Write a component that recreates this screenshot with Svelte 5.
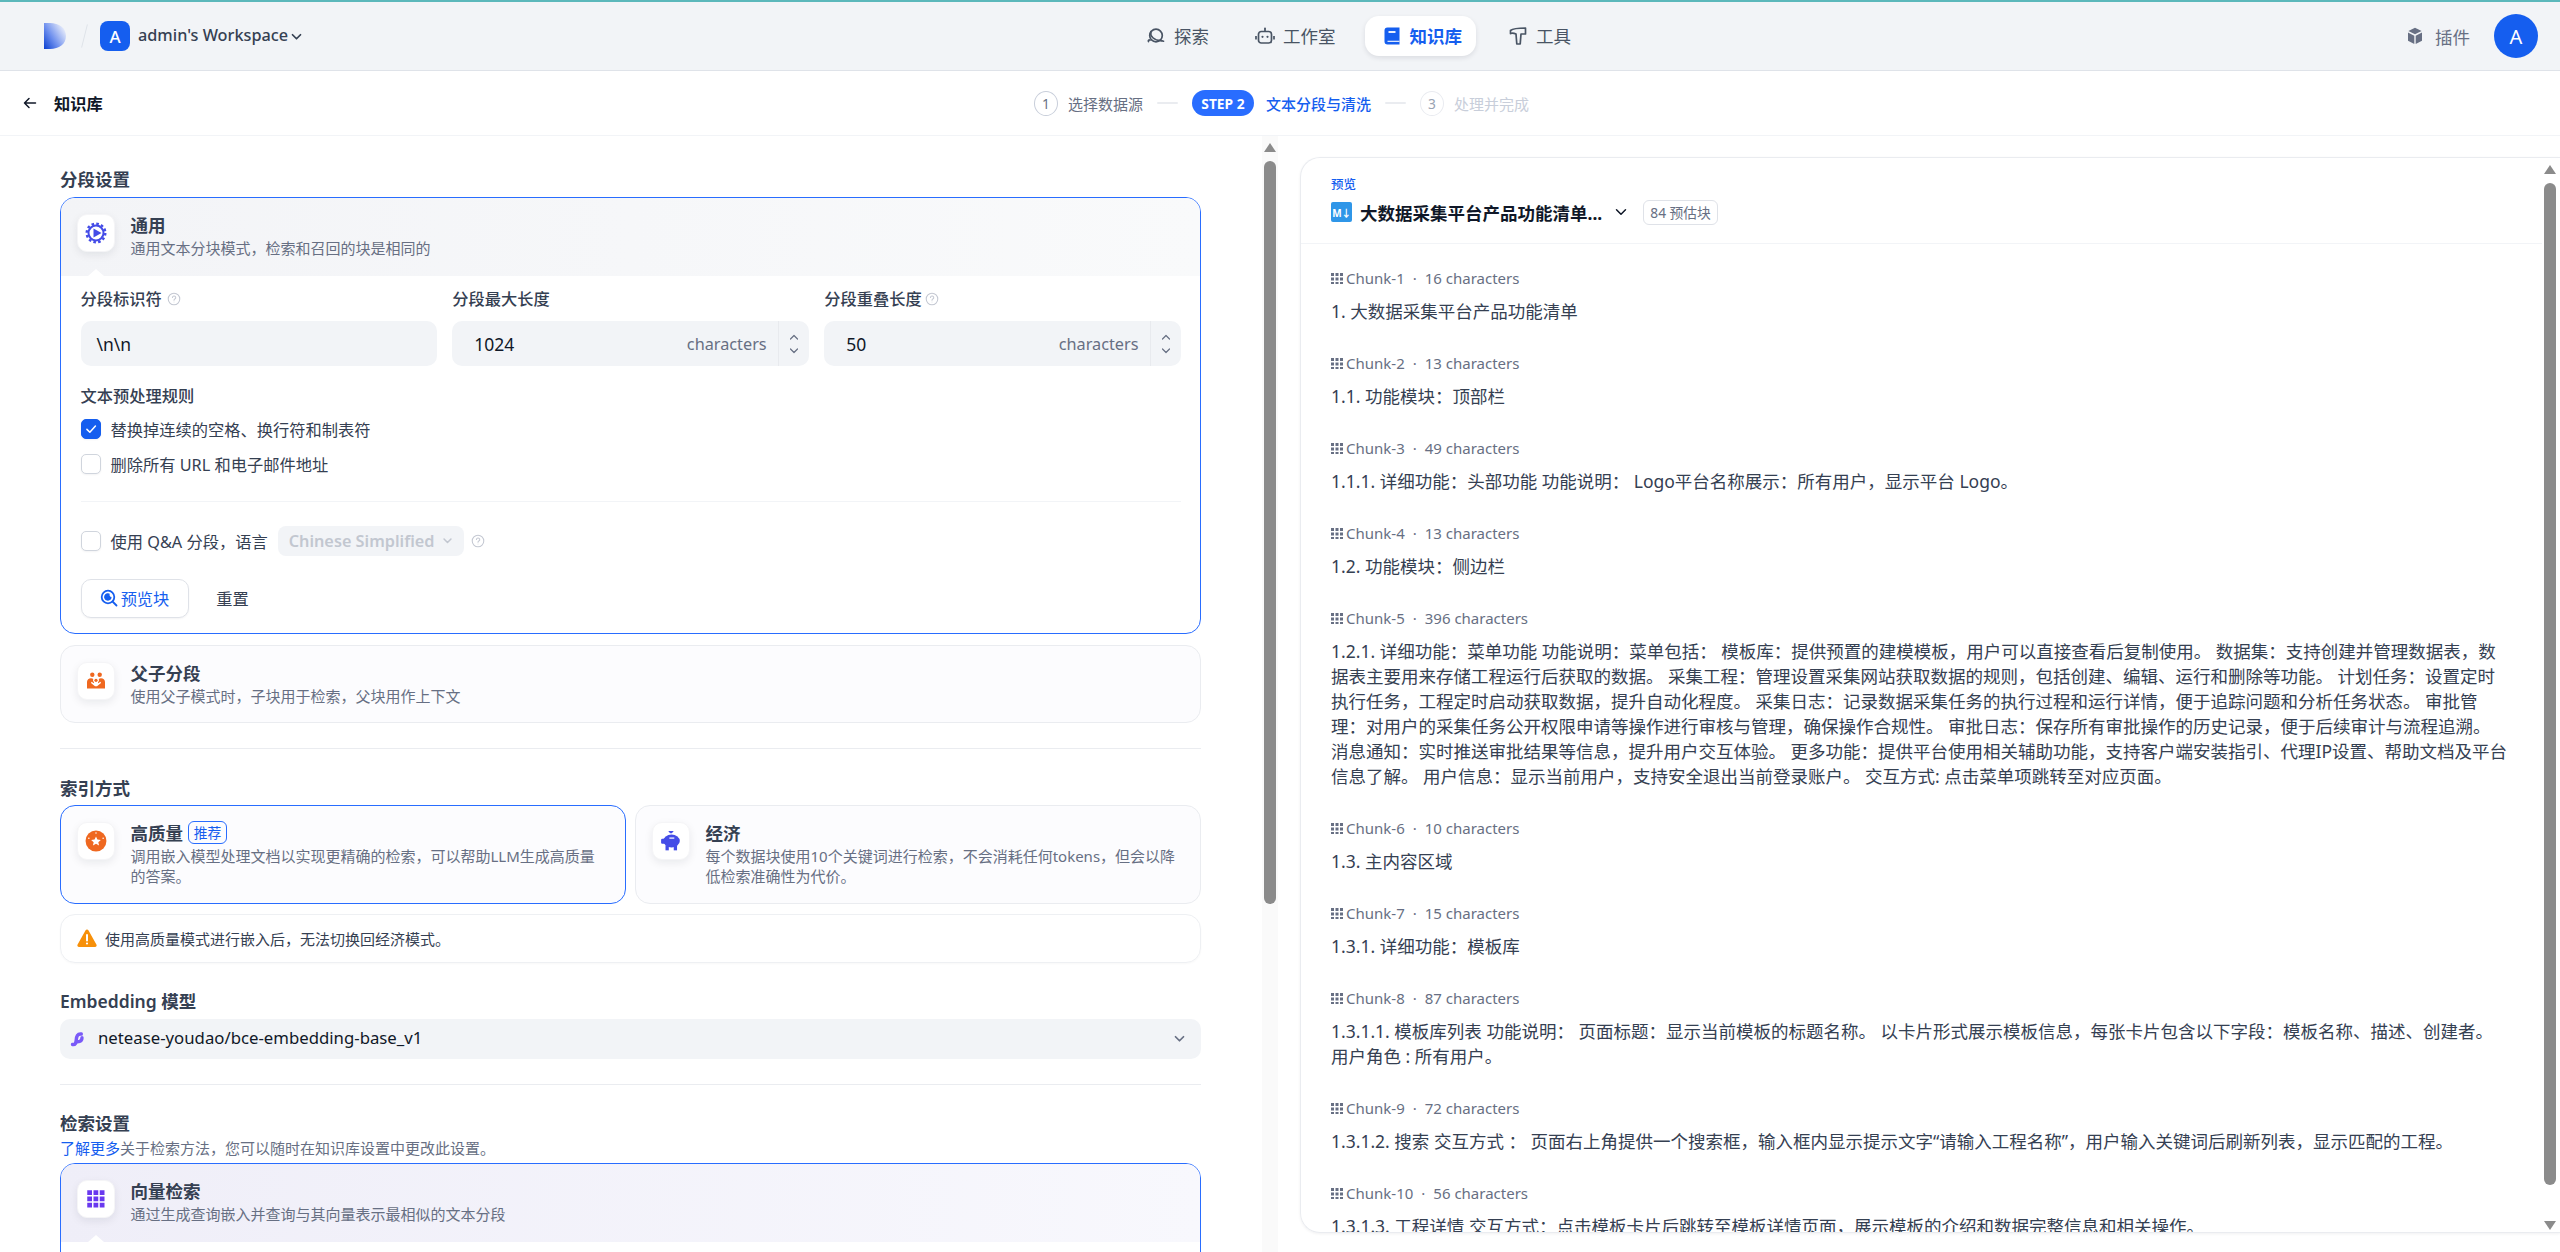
<script>
  const nav = [
    { key: 'explore', label: '探索' },
    { key: 'studio', label: '工作室' },
    { key: 'datasets', label: '知识库', active: true },
    { key: 'tools', label: '工具' }
  ];

  const chunks = [
    { n: 1, size: 16, text: '1. 大数据采集平台产品功能清单' },
    { n: 2, size: 13, text: '1.1. 功能模块：顶部栏' },
    { n: 3, size: 49, text: '1.1.1. 详细功能：头部功能 功能说明： Logo平台名称展示：所有用户，显示平台 Logo。' },
    { n: 4, size: 13, text: '1.2. 功能模块：侧边栏' },
    { n: 5, size: 396, text: '1.2.1. 详细功能：菜单功能 功能说明：菜单包括： 模板库：提供预置的建模模板，用户可以直接查看后复制使用。 数据集：支持创建并管理数据表，数据表主要用来存储工程运行后获取的数据。 采集工程：管理设置采集网站获取数据的规则，包括创建、编辑、运行和删除等功能。 计划任务：设置定时执行任务，工程定时启动获取数据，提升自动化程度。 采集日志：记录数据采集任务的执行过程和运行详情，便于追踪问题和分析任务状态。 审批管理：对用户的采集任务公开权限申请等操作进行审核与管理，确保操作合规性。 审批日志：保存所有审批操作的历史记录，便于后续审计与流程追溯。 消息通知：实时推送审批结果等信息，提升用户交互体验。 更多功能：提供平台使用相关辅助功能，支持客户端安装指引、代理IP设置、帮助文档及平台信息了解。 用户信息：显示当前用户，支持安全退出当前登录账户。 交互方式: 点击菜单项跳转至对应页面。' },
    { n: 6, size: 10, text: '1.3. 主内容区域' },
    { n: 7, size: 15, text: '1.3.1. 详细功能：模板库' },
    { n: 8, size: 87, text: '1.3.1.1. 模板库列表 功能说明： 页面标题：显示当前模板的标题名称。 以卡片形式展示模板信息，每张卡片包含以下字段：模板名称、描述、创建者。 用户角色 : 所有用户。' },
    { n: 9, size: 72, text: '1.3.1.2. 搜索 交互方式 ： 页面右上角提供一个搜索框，输入框内显示提示文字“请输入工程名称”，用户输入关键词后刷新列表，显示匹配的工程。' },
    { n: 10, size: 56, text: '1.3.1.3. 工程详情 交互方式：点击模板卡片后跳转至模板详情页面，展示模板的介绍和数据完整信息和相关操作。' }
  ];

  const dots = [0, 1, 2, 3, 4, 5, 6, 7, 8];
</script>

{#snippet help()}
  <svg class="help" viewBox="0 0 16 16" fill="none" stroke="#c4c8d2" stroke-width="1.2">
    <circle cx="8" cy="8" r="6.6" />
    <path d="M6.2 6.3a1.9 1.9 0 1 1 2.7 1.8c-.6.3-.9.7-.9 1.3" stroke-linecap="round" />
    <circle cx="8" cy="11.4" r=".5" fill="#c4c8d2" stroke="none" />
  </svg>
{/snippet}

{#snippet chevron(cls)}
  <svg class={cls} viewBox="0 0 12 12" fill="none" stroke="currentColor" stroke-width="1.4" stroke-linecap="round" stroke-linejoin="round">
    <path d="M2.8 4.6 6 7.8l3.2-3.2" />
  </svg>
{/snippet}

{#snippet number(value)}
  <div class="input number">
    <span class="value">{value}</span>
    <span class="unit">characters</span>
    <div class="stepper">
      <svg viewBox="0 0 10 22" fill="none" stroke="#676f83" stroke-width="1.2" stroke-linecap="round" stroke-linejoin="round">
        <path d="M1.5 6 5 2.5 8.5 6" />
        <path d="M1.5 16 5 19.5 8.5 16" />
      </svg>
    </div>
  </div>
{/snippet}

<div class="page">
  <header class="topbar">
    <div class="brand">
      <svg class="logo" viewBox="0 0 22 26">
        <defs>
          <linearGradient id="logoFill" x1="0" y1="1" x2="1" y2="0.25">
            <stop offset="0" stop-color="#0a3fd0" />
            <stop offset=".45" stop-color="#6f90ee" />
            <stop offset="1" stop-color="#eef1fb" />
          </linearGradient>
        </defs>
        <path d="M0 0h6c9 0 16 5 16 13s-7 13-16 13H0z" fill="url(#logoFill)" />
      </svg>
      <span class="slash"></span>
      <span class="ws-badge">A</span>
      <span class="ws-name">admin's Workspace</span>
      {@render chevron('ws-chev')}
    </div>

    <nav class="nav">
      {#each nav as item}
        <div class="nav-item" class:active={item.active}>
          {#if item.key === 'explore'}
            <svg viewBox="0 0 20 20" fill="none" stroke="#495464" stroke-width="1.7">
              <circle cx="10" cy="9.500" r="6.300" />
              <path d="M4.800 5.600C3.800 9.800 7.800 14.800 15.300 14.600" stroke-linecap="round" />
              <path d="M2.500 15.500a1 1 0 0 1 1.500-1.300M15.300 14.600l2.200.6" stroke-linecap="round" />
            </svg>
          {:else if item.key === 'studio'}
            <svg viewBox="0 0 20 20" fill="none" stroke="#495464" stroke-width="1.7">
              <rect x="3.500" y="5.500" width="13" height="11.500" rx="2.800" />
              <path d="M10 5.500V3M1 10v3.500M19 10v3.500" />
              <circle cx="10" cy="2.500" r="1" fill="#495464" stroke="none" />
              <circle cx="7.500" cy="10.800" r="1.100" fill="#495464" stroke="none" />
              <circle cx="12.500" cy="10.800" r="1.100" fill="#495464" stroke="none" />
            </svg>
          {:else if item.key === 'datasets'}
            <svg viewBox="0 0 20 20">
              <path d="M2.500 4.500A3 3 0 0 1 5.500 1.500H17.500V18.500H5.500A3 3 0 0 1 2.500 15.500z" fill="#155eef" />
              <path d="M6.500 6h7" stroke="#fff" stroke-width="1.800" />
              <path d="M5.500 15.300h12" stroke="#fff" stroke-width="1.100" />
            </svg>
          {:else}
            <svg viewBox="0 0 20 20" fill="none" stroke="#495464" stroke-width="1.7" stroke-linejoin="round">
              <path d="M2.500 4.500C5 2.500 8 2 17.500 2V8H13L12.200 18H8.800L8 8C6 7 4.500 6.500 2.500 7.500z" />
            </svg>
          {/if}
          <span>{item.label}</span>
        </div>
      {/each}
    </nav>

    <div class="account">
      <svg class="plugin" viewBox="0 0 16 18" fill="#676f83">
        <path d="M8 .8 14.600 4 8 7.300 1.400 4z" />
        <path d="M1 5.500 7.300 8.700V17L1 13.800z" />
        <path d="M15 5.500 8.700 8.700V17L15 13.800z" />
      </svg>
      <span class="plugin-label">插件</span>
      <span class="avatar">A</span>
    </div>
  </header>

  <div class="subbar">
    <div class="back">
      <svg viewBox="0 0 14 14" fill="none" stroke="#101828" stroke-width="1.5" stroke-linecap="round" stroke-linejoin="round">
        <path d="M12.500 7h-11M6 2.500 1.500 7 6 11.500" />
      </svg>
      <span>知识库</span>
    </div>
    <div class="steps">
      <span class="step-num">1</span>
      <span class="step-label">选择数据源</span>
      <span class="step-dash"></span>
      <span class="step-pill">STEP 2</span>
      <span class="step-label current">文本分段与清洗</span>
      <span class="step-dash"></span>
      <span class="step-num todo">3</span>
      <span class="step-label todo">处理并完成</span>
    </div>
  </div>

  <main class="content">
    <section class="left-pane">
      <div class="form">
        <h2 class="section-title first">分段设置</h2>

        <div class="option selected">
          <div class="option-head">
            <div class="icon-box">
              <svg class="big" viewBox="0 0 22 22">
                <circle cx="11" cy="11" r="7.500" fill="none" stroke="#444ce7" stroke-width="2" />
                <circle cx="11" cy="11" r="9.300" fill="none" stroke="#444ce7" stroke-width="2.400" stroke-dasharray="2.600 2.270" />
                <path d="M8.500 6.400 16.500 11l-8 4.600z" fill="#444ce7" />
              </svg>
            </div>
            <div class="option-text">
              <div class="option-title">通用</div>
              <div class="option-desc">通用文本分块模式，检索和召回的块是相同的</div>
            </div>
            <span class="notch"></span>
          </div>

          <div class="option-body">
            <div class="fields">
              <div class="field">
                <div class="label spaced">分段标识符 {@render help()}</div>
                <div class="input"><span class="value sep">\n\n</span></div>
              </div>
              <div class="field">
                <div class="label">分段最大长度</div>
                {@render number('1024')}
              </div>
              <div class="field">
                <div class="label">分段重叠长度{@render help()}</div>
                {@render number('50')}
              </div>
            </div>

            <div class="label rules">文本预处理规则</div>
            <div class="check-row">
              <span class="check on">
                <svg viewBox="0 0 12 12" fill="none" stroke="#fff" stroke-width="1.3" stroke-linecap="round" stroke-linejoin="round"><path d="M2.500 6.300 5 8.800l4.800-5.300" /></svg>
              </span>
              替换掉连续的空格、换行符和制表符
            </div>
            <div class="check-row">
              <span class="check"></span>
              删除所有 URL 和电子邮件地址
            </div>

            <div class="rule-line"></div>

            <div class="check-row qa">
              <span class="check"></span>
              使用 Q&A 分段，语言
              <div class="lang">Chinese Simplified {@render chevron('lang-chev')}</div>
              {@render help()}
            </div>

            <div class="actions">
              <button class="preview-btn">
                <svg viewBox="0 0 18 18" fill="none" stroke="#155eef" stroke-width="1.8" stroke-linecap="round">
                  <circle cx="8" cy="8" r="6.300" />
                  <path d="m13 13 3.500 3.500" />
                  <path d="M9 5.200a3 3 0 1 0 1.800 3.300" stroke-width="1.5" fill="#155eef" />
                </svg>
                预览块
              </button>
              <button class="reset-btn">重置</button>
            </div>
          </div>
        </div>

        <div class="option plain parent">
          <div class="option-head">
            <div class="icon-box">
              <svg viewBox="0 0 20 20" fill="#ef6820">
                <circle cx="6.300" cy="3.800" r="2.200" />
                <circle cx="13.700" cy="3.800" r="2.200" />
                <path d="M1 17.500V11c0-2.500 1.800-3.800 4-3.800 1 0 1.700.3 2.300.7C6.800 9 7 10.200 8 11v1.200L5.500 10.800 5 12l4 3.200h2l4-3.200-.5-1.200-2.500 1.400V11c1-.8 1.200-2 .7-3.100.6-.4 1.300-.7 2.300-.7 2.200 0 4 1.300 4 3.800v6.500z" />
                <circle cx="10" cy="9.300" r="1.600" />
              </svg>
            </div>
            <div class="option-text">
              <div class="option-title">父子分段</div>
              <div class="option-desc">使用父子模式时，子块用于检索，父块用作上下文</div>
            </div>
          </div>
        </div>

        <div class="rule-full"></div>

        <h2 class="section-title">索引方式</h2>
        <div class="index-grid">
          <div class="index-card picked">
            <div class="icon-box">
              <svg class="big" viewBox="0 0 20 20">
                <circle cx="10" cy="10" r="9.500" fill="#ef6820" />
                <path d="m10 5.800 1.300 2.900 3.100.3-2.300 2.100.7 3.100-2.800-1.600-2.800 1.600.7-3.100L5.600 9l3.100-.3z" fill="#fff" />
                <g fill="#fff"><circle cx="10" cy="2.800" r=".7" /><circle cx="3.500" cy="7.500" r=".7" /><circle cx="16.500" cy="7.500" r=".7" /></g>
              </svg>
            </div>
            <div class="option-text">
              <div class="option-title">高质量 <span class="badge">推荐</span></div>
              <div class="option-desc">调用嵌入模型处理文档以实现更精确的检索，可以帮助LLM生成高质量的答案。</div>
            </div>
          </div>
          <div class="index-card">
            <div class="icon-box">
              <svg class="big" viewBox="0 0 20 20" fill="#444ce7">
                <path d="M7.500.8h5L10.800 3h-1.600z" />
                <ellipse cx="10.500" cy="10" rx="7.500" ry="5.800" />
                <rect x="1" y="8" width="4" height="4.500" rx="1" />
                <rect x="5" y="14" width="3" height="4.500" />
                <rect x="12.500" y="14" width="3" height="4.500" />
                <rect x="8.500" y="6.800" width="4.500" height="1.100" fill="#fff" />
              </svg>
            </div>
            <div class="option-text">
              <div class="option-title">经济</div>
              <div class="option-desc">每个数据块使用10个关键词进行检索，不会消耗任何tokens，但会以降低检索准确性为代价。</div>
            </div>
          </div>
        </div>

        <div class="warn">
          <svg viewBox="0 0 20 18">
            <path d="M8.600 1.300a1.600 1.600 0 0 1 2.800 0l8 14.300a1.600 1.600 0 0 1-1.400 2.400H2a1.600 1.600 0 0 1-1.400-2.400z" fill="#f79009" />
            <path d="M10 6v5.500" stroke="#fff" stroke-width="2" stroke-linecap="round" />
            <circle cx="10" cy="14.500" r="1.100" fill="#fff" />
          </svg>
          使用高质量模式进行嵌入后，无法切换回经济模式。
        </div>

        <h2 class="section-title model">Embedding 模型</h2>
        <div class="model-select">
          <svg viewBox="0 0 16 16" fill="none" stroke="#7a5af8" stroke-width="3.4" stroke-linecap="round">
            <path d="M2.500 13.500c3 .5 3.500-1.500 3.800-5 .3-3 1-6 5-5.500" />
            <path d="M12 6.800c0 2.800-1.500 4-4.500 4" />
          </svg>
          <span>netease-youdao/bce-embedding-base_v1</span>
          {@render chevron('model-chev')}
        </div>

        <div class="rule-full"></div>

        <h2 class="section-title retrieval">检索设置</h2>
        <p class="hint"><span class="link">了解更多</span>关于检索方法，您可以随时在知识库设置中更改此设置。</p>

        <div class="option selected search">
          <div class="option-head">
            <div class="icon-box">
              <svg viewBox="0 0 16 16" fill="#6938ef">
                {#each dots as d}
                  <rect x={1 + (d % 3) * 5} y={1 + Math.floor(d / 3) * 5} width="3.800" height="3.800" />
                {/each}
              </svg>
            </div>
            <div class="option-text">
              <div class="option-title">向量检索</div>
              <div class="option-desc">通过生成查询嵌入并查询与其向量表示最相似的文本分段</div>
            </div>
            <span class="notch"></span>
          </div>
          <div class="option-body tail"></div>
        </div>
      </div>

      <div class="scrollbar">
        <span class="arrow up"></span>
        <span class="thumb"></span>
      </div>
    </section>

    <section class="right-pane">
      <div class="preview-card">
        <div class="preview-main">
          <div class="preview-head">
            <div class="preview-tag">预览</div>
            <div class="preview-file">
              <span class="md-icon">M↓</span>
              <span class="file-name">大数据采集平台产品功能清单...</span>
              <svg class="file-chev" viewBox="0 0 12 12" fill="none" stroke="#101828" stroke-width="1.5" stroke-linecap="round" stroke-linejoin="round"><path d="M1.500 3.800 6 8.300l4.500-4.500" /></svg>
              <span class="est">84 预估块</span>
            </div>
          </div>

          <div class="chunks">
            {#each chunks as c}
              <article class="chunk">
                <div class="chunk-meta">
                  <svg viewBox="0 0 12 12" fill="#676f83">
                    {#each dots as d}
                      <rect x={(d % 3) * 4.5} y={Math.floor(d / 3) * 4.5 + 1} width="3" height="3" />
                    {/each}
                  </svg>
                  <span class="chunk-id">Chunk-{c.n}</span>
                  <span class="chunk-dot">·</span>
                  <span>{c.size} characters</span>
                </div>
                <p class="chunk-text">{c.text}</p>
              </article>
            {/each}
          </div>
        </div>

        <div class="scrollbar tall">
          <span class="arrow up"></span>
          <span class="thumb"></span>
          <span class="arrow down"></span>
        </div>
      </div>
    </section>
  </main>
</div>

<style>
  :global(body) {
    margin: 0;
    background: #fff;
  }

  .page {
    height: 1252px;
    display: flex;
    flex-direction: column;
    overflow: hidden;
    font-family: "Noto Sans", "Noto Sans CJK SC", sans-serif;
    color: #354052;
    font-size: 17.5px;
  }

  /* Top bar */
  .topbar {
    height: 68px;
    flex: none;
    display: flex;
    align-items: center;
    background: #f2f4f7;
    border-top: 2px solid #5cb8bb;
    border-bottom: 1px solid #dfe3e9;
    padding: 0 22px 0 44px;
  }

  .brand {
    display: flex;
    align-items: center;
    width: 1085px;
    flex: none;
  }

  .logo {
    width: 22px;
    height: 26px;
  }

  .slash {
    width: 1px;
    height: 24px;
    margin: 0 15px 0 18px;
    background: #dfe3e9;
    transform: rotate(14deg);
  }

  .ws-badge {
    width: 30px;
    height: 30px;
    border-radius: 8px;
    background: #155eef;
    color: #fff;
    font-size: 17px;
    font-weight: 500;
    display: flex;
    align-items: center;
    justify-content: center;
  }

  .ws-name {
    margin-left: 8px;
    padding-bottom: 2px;
    font-size: 16.25px;
    font-weight: 500;
    color: #354052;
  }

  :global(.ws-chev) {
    width: 15px;
    height: 15px;
    margin-left: 1px;
    color: #354052;
  }

  .nav {
    display: flex;
    align-items: center;
    gap: 15px;
  }

  .nav-item {
    height: 40px;
    display: flex;
    align-items: center;
    gap: 8px;
    padding: 0 14px 0 17px;
    border-radius: 14px;
    color: #495464;
    font-size: 17.5px;
  }

  .nav-item span {
    padding-bottom: 2px;
  }

  .nav-item svg {
    width: 20px;
    height: 20px;
  }

  .nav-item.active {
    background: #fff;
    color: #155eef;
    font-weight: 600;
    box-shadow: 0 2px 5px rgba(16, 24, 40, 0.1);
  }

  .account {
    margin-left: auto;
    display: flex;
    align-items: center;
  }

  .plugin {
    width: 16px;
    height: 18px;
  }

  .plugin-label {
    margin: 0 24px 0 12px;
    font-size: 17.5px;
    color: #676f83;
  }

  .avatar {
    width: 44px;
    height: 44px;
    border-radius: 50%;
    background: #155eef;
    color: #fff;
    font-size: 20px;
    display: flex;
    align-items: center;
    justify-content: center;
  }

  /* Sub bar */
  .subbar {
    height: 64px;
    flex: none;
    display: flex;
    align-items: center;
    justify-content: space-between;
    border-bottom: 1px solid #f2f4f7;
    padding-left: 23px;
    padding-right: 1031px;
  }

  .back {
    display: flex;
    align-items: center;
    gap: 17px;
    font-size: 16.25px;
    font-weight: 600;
    color: #101828;
  }

  .back svg {
    width: 14px;
    height: 14px;
  }

  .steps {
    display: flex;
    align-items: center;
  }

  .step-num {
    width: 24px;
    height: 25px;
    box-sizing: border-box;
    border: 1.5px solid #c8ceda;
    border-radius: 50%;
    font-size: 13.75px;
    color: #676f83;
    display: flex;
    align-items: center;
    justify-content: center;
  }

  .step-num.todo {
    border-color: #e9ebf0;
    color: #98a2b2;
  }

  .step-label {
    margin-left: 10px;
    font-size: 15px;
    color: #676f83;
  }

  .step-label.current {
    margin-left: 12px;
    color: #155eef;
    font-weight: 500;
  }

  .step-label.todo {
    color: #c8ceda;
  }

  .step-dash {
    width: 21px;
    height: 2px;
    margin: 0 14px;
    background: #eaecf0;
    border-radius: 1px;
  }

  .step-pill {
    width: 62px;
    height: 26px;
    border-radius: 13px;
    background: #296dff;
    color: #fff;
    font-size: 13.75px;
    font-weight: 700;
    display: flex;
    align-items: center;
    justify-content: center;
  }

  /* Panes */
  .content {
    flex: 1;
    min-height: 0;
    display: flex;
  }

  .left-pane {
    width: 1280px;
    flex: none;
    display: flex;
    overflow: hidden;
  }

  .form {
    width: 1141px;
    flex: none;
    margin-left: 60px;
    padding-top: 30px;
  }

  .section-title {
    margin: 0 0 6px;
    height: 22px;
    line-height: 22px;
    font-size: 17.5px;
    font-weight: 600;
    color: #354052;
  }

  .section-title.first {
    margin: 2px 0 7px;
  }

  .option {
    box-sizing: border-box;
    border: 1.5px solid #eaecf0;
    border-radius: 15px;
    overflow: hidden;
    background: #fff;
  }

  .option.selected {
    border-color: #296dff;
  }

  .option.parent {
    margin-top: 11px;
    height: 78px;
    background: #fcfcfe;
  }

  .option-head {
    position: relative;
    display: flex;
    gap: 16px;
    height: 78px;
    box-sizing: border-box;
    padding: 16px 15.5px 0;
    background: linear-gradient(90deg, #f3f4f7, #f9fafb);
  }

  .parent .option-head {
    background: none;
  }

  .search .option-head {
    background: linear-gradient(90deg, #efeef8, #f8f8fd);
  }

  .icon-box {
    width: 38px;
    height: 38px;
    flex: none;
    border-radius: 10px;
    background: #fff;
    box-shadow: 0 3px 8px rgba(16, 24, 40, 0.08);
    border: 1px solid #f5f5f7;
    box-sizing: border-box;
    display: flex;
    align-items: center;
    justify-content: center;
  }

  .icon-box svg {
    width: 20px;
    height: 20px;
  }

  .icon-box svg.big {
    width: 22px;
    height: 22px;
  }

  .option-title {
    height: 24px;
    line-height: 24px;
    margin-top: -1px;
    font-size: 17.5px;
    font-weight: 600;
    color: #354052;
    display: flex;
    align-items: center;
    gap: 5px;
  }

  .option-desc {
    margin-top: 1px;
    font-size: 15px;
    line-height: 20px;
    color: #676f83;
  }

  .notch {
    position: absolute;
    left: 27px;
    bottom: 0;
    border-left: 8px solid transparent;
    border-right: 8px solid transparent;
    border-bottom: 7px solid #fff;
  }

  .option-body {
    padding: 12px 19.5px 15px;
  }

  .option-body.tail {
    height: 30px;
    box-sizing: border-box;
  }

  .fields {
    display: grid;
    grid-template-columns: repeat(3, 1fr);
    gap: 15.5px;
  }

  .field {
    min-width: 0;
  }

  .label {
    height: 22px;
    line-height: 22px;
    font-size: 16.25px;
    font-weight: 500;
    color: #354052;
    display: flex;
    align-items: center;
    gap: 3px;
  }

  .label.spaced {
    gap: 5px;
  }

  .help {
    width: 14px;
    height: 14px;
    flex: none;
  }

  .input {
    margin-top: 11px;
    height: 45px;
    box-sizing: border-box;
    border-radius: 10px;
    background: #f2f4f7;
    display: flex;
    align-items: center;
    padding-left: 16px;
    overflow: hidden;
  }

  .value {
    font-size: 17.5px;
    color: #101828;
  }

  .number .value {
    margin-left: 6px;
    flex: 1;
  }

  .unit {
    font-size: 16.25px;
    color: #676f83;
    margin-right: 11px;
  }

  .stepper {
    width: 30px;
    height: 100%;
    border-left: 1px solid #e8eaee;
    display: flex;
    align-items: center;
    justify-content: center;
  }

  .stepper svg {
    width: 10px;
    height: 22px;
  }

  .rules {
    margin-top: 19px;
  }

  .check-row {
    margin-top: 10.5px;
    height: 22px;
    display: flex;
    align-items: center;
    gap: 10px;
    font-size: 16.25px;
    color: #354052;
  }

  .check-row + .check-row {
    margin-top: 13px;
  }

  .check {
    width: 20px;
    height: 20px;
    flex: none;
    box-sizing: border-box;
    border: 1px solid #d0d5dd;
    border-radius: 5px;
    background: #fff;
    box-shadow: 0 1px 2px rgba(16, 24, 40, 0.05);
    display: flex;
    align-items: center;
    justify-content: center;
  }

  .check.on {
    background: #155eef;
    border-color: #155eef;
  }

  .check svg {
    width: 14px;
    height: 14px;
  }

  .rule-line {
    height: 1px;
    margin-top: 26px;
    background: #f2f4f7;
  }

  .check-row.qa {
    margin-top: 28px;
    height: 22px;
  }

  .lang {
    height: 30px;
    padding: 0 10px 0 11px;
    border-radius: 8px;
    background: #f2f4f7;
    color: #c2c7d0;
    font-weight: 600;
    display: flex;
    align-items: center;
    gap: 7px;
  }

  :global(.lang-chev) {
    width: 13px;
    height: 13px;
  }

  .qa .help {
    margin-left: -3px;
  }

  .actions {
    margin-top: 27px;
    display: flex;
    align-items: center;
    gap: 16px;
  }

  .actions button {
    font: inherit;
    font-size: 16.25px;
    cursor: pointer;
  }

  .preview-btn {
    width: 108px;
    height: 39px;
    border: 1px solid #dfe2e8;
    border-radius: 10px;
    background: #fff;
    color: #155eef;
    box-shadow: 0 1px 2px rgba(16, 24, 40, 0.05);
    display: flex;
    align-items: center;
    justify-content: center;
    gap: 3px;
    padding: 0;
  }

  .preview-btn svg {
    width: 18px;
    height: 18px;
  }

  .reset-btn {
    width: 56px;
    height: 39px;
    border: none;
    background: none;
    color: #354052;
    padding: 0;
  }

  .rule-full {
    height: 1px;
    margin: 25px 0 28px;
    background: #eaecf0;
  }

  .index-grid {
    display: grid;
    grid-template-columns: 566px 1fr;
    gap: 9px;
  }

  .index-card {
    box-sizing: border-box;
    height: 99px;
    display: flex;
    gap: 16px;
    padding: 16px 15.5px 0;
    border: 1.5px solid #eaecf0;
    border-radius: 15px;
    background: #fcfcfe;
  }

  .index-card.picked {
    border-color: #296dff;
  }

  .badge {
    box-sizing: border-box;
    width: 39px;
    height: 23px;
    border: 1px solid #296dff;
    border-radius: 6px;
    font-size: 13.75px;
    font-weight: 400;
    color: #155eef;
    display: flex;
    align-items: center;
    justify-content: center;
  }

  .warn {
    box-sizing: border-box;
    margin-top: 10px;
    height: 49px;
    display: flex;
    align-items: center;
    gap: 8px;
    padding-left: 16px;
    border: 1px solid #eef0f3;
    border-radius: 15px;
    font-size: 15px;
    color: #354052;
    box-shadow: 0 1px 2px rgba(16, 24, 40, 0.03);
  }

  .warn svg {
    width: 20px;
    height: 18px;
  }

  .section-title.model {
    margin: 27px 0 7px;
  }

  .model-select {
    height: 40px;
    display: flex;
    align-items: center;
    gap: 12px;
    padding: 0 14px 0 10px;
    border-radius: 10px;
    background: #f2f4f7;
    color: #101828;
    font-size: 16.75px;
  }

  .model-select svg:first-child {
    width: 16px;
    height: 16px;
  }

  .model-select span {
    flex: 1;
    padding-bottom: 2px;
  }

  :global(.model-chev) {
    width: 15px;
    height: 15px;
    color: #676f83;
  }

  .section-title.retrieval {
    margin-top: -1px;
  }

  .hint {
    margin: -2px 0 5px;
    line-height: 20px;
    font-size: 15px;
    color: #676f83;
  }

  .link {
    color: #155eef;
  }

  /* Scrollbars */
  .scrollbar {
    width: 16px;
    margin-left: auto;
    margin-right: 2px;
    display: flex;
    flex-direction: column;
    align-items: center;
    background: #fafafa;
    padding-top: 7px;
    box-sizing: border-box;
  }

  .arrow {
    width: 0;
    height: 0;
    border-left: 6px solid transparent;
    border-right: 6px solid transparent;
  }

  .arrow.up {
    border-bottom: 9px solid #8b8b8b;
  }

  .arrow.down {
    border-top: 9px solid #8b8b8b;
  }

  .thumb {
    width: 12px;
    height: 743px;
    margin-top: 9px;
    border-radius: 6px;
    background: #8b8b8b;
  }

  .tall {
    background: none;
    margin-right: 2px;
  }

  .tall .thumb {
    height: 1002px;
  }

  .tall .arrow.down {
    margin-top: 36px;
  }

  /* Preview */
  .right-pane {
    flex: 1;
    min-width: 0;
    padding: 21px 0 19px 20px;
    display: flex;
  }

  .preview-card {
    flex: 1;
    min-width: 0;
    display: flex;
    box-sizing: border-box;
    border: 1px solid #eaecf0;
    border-right: none;
    border-radius: 20px 0 0 20px;
    overflow: hidden;
    box-shadow: 0 1px 3px rgba(16, 24, 40, 0.06);
  }

  .preview-main {
    flex: 1;
    min-width: 0;
    overflow: hidden;
  }

  .preview-head {
    height: 86px;
    box-sizing: border-box;
    padding: 20px 0 0 30px;
    border-bottom: 1px solid #f2f4f7;
  }

  .preview-tag {
    line-height: 14px;
    font-size: 12.5px;
    font-weight: 500;
    color: #155eef;
  }

  .preview-file {
    margin-top: 7px;
    height: 26px;
    display: flex;
    align-items: center;
  }

  .md-icon {
    width: 21px;
    height: 20px;
    border-radius: 2px;
    background: #2f96e8;
    color: #fff;
    font-size: 10px;
    font-weight: 700;
    letter-spacing: -0.5px;
    display: flex;
    align-items: center;
    justify-content: center;
  }

  .file-name {
    margin-left: 8px;
    font-size: 17.5px;
    font-weight: 700;
    color: #101828;
  }

  .file-chev {
    width: 12px;
    height: 12px;
    margin-left: 13px;
  }

  .est {
    box-sizing: border-box;
    height: 25px;
    margin-left: 16px;
    padding: 0 6px;
    border: 1px solid #dfe2e8;
    border-radius: 6px;
    font-size: 13.75px;
    color: #676f83;
    display: flex;
    align-items: center;
  }

  .chunks {
    padding: 24px 0 0 30px;
    width: 1180px;
  }

  .chunk {
    margin-bottom: 29px;
  }

  .chunk-meta {
    height: 20px;
    display: flex;
    align-items: center;
    font-size: 15px;
    color: #676f83;
  }

  .chunk-meta svg {
    width: 12px;
    height: 12px;
    margin-right: 3px;
  }

  .chunk-dot {
    margin: 0 8px;
  }

  .chunk-text {
    margin: 11px 0 0;
    line-height: 25px;
    font-size: 17.5px;
    color: #354052;
  }
</style>
